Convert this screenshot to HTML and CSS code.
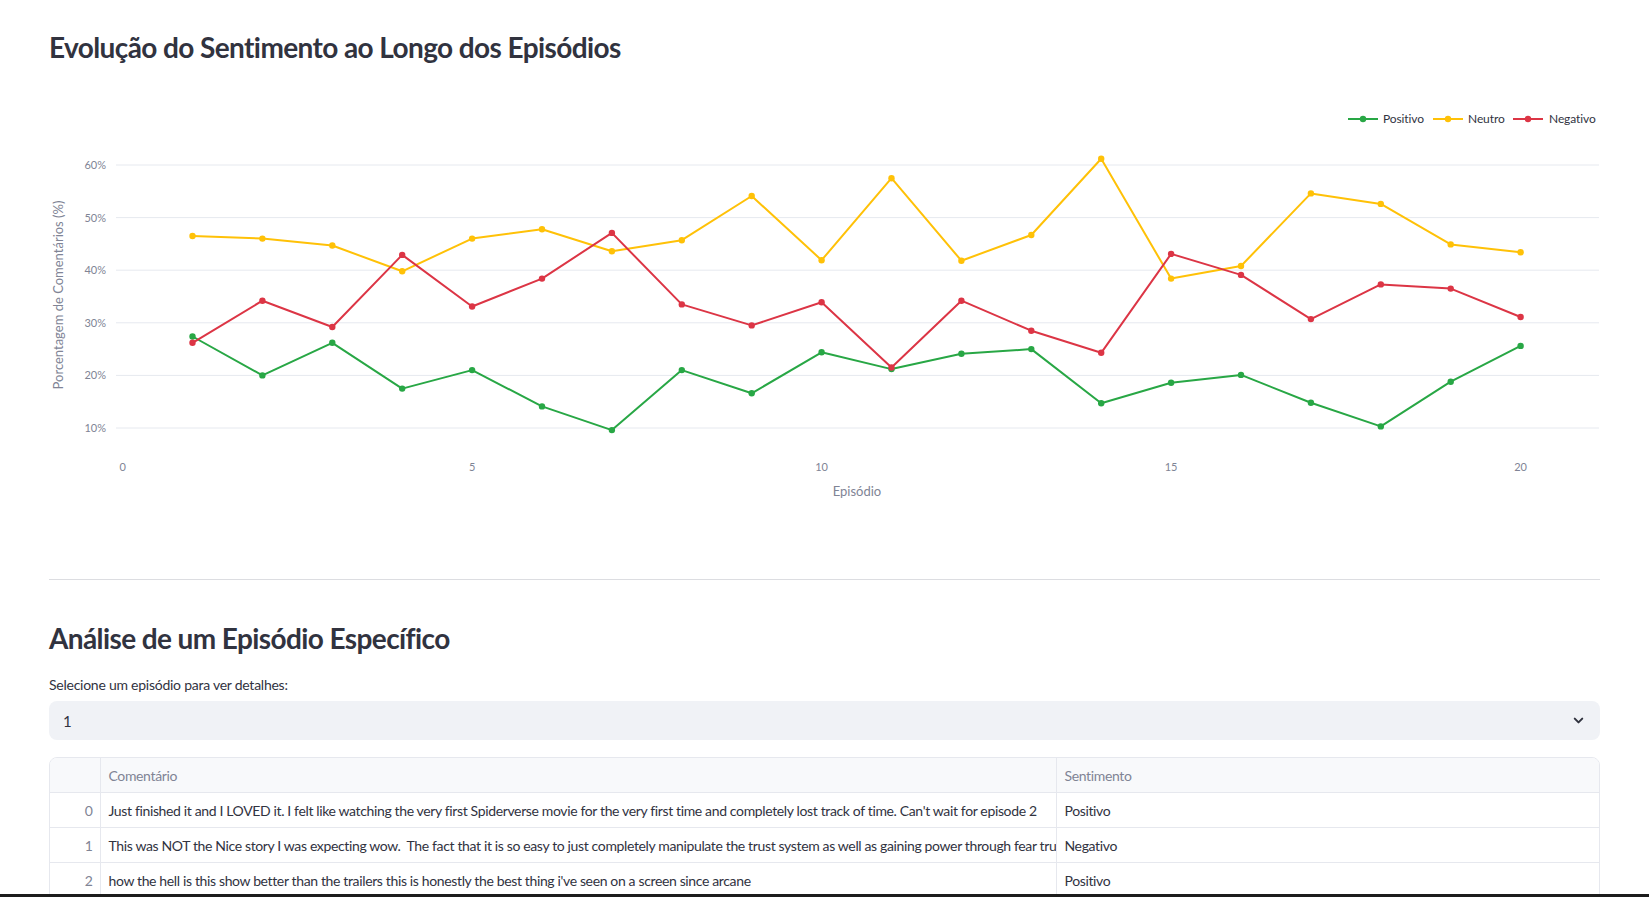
FILE: index.html
```html
<!DOCTYPE html>
<html lang="pt">
<head>
<meta charset="utf-8">
<title>Análise de Sentimento</title>
<link rel="stylesheet" href="styles.css">
</head>
<body>
<main class="main">
  <h2 class="title title-first">Evolução do Sentimento ao Longo dos Episódios</h2>

  <div class="chart">
    <svg class="chart-svg" width="1551" height="480" viewBox="0 0 1551 480" xmlns="http://www.w3.org/2000/svg">
      <g class="grid">
        <line x1="67" y1="85" x2="1550" y2="85"/>
        <line x1="67" y1="137.6" x2="1550" y2="137.6"/>
        <line x1="67" y1="190.2" x2="1550" y2="190.2"/>
        <line x1="67" y1="242.8" x2="1550" y2="242.8"/>
        <line x1="67" y1="295.4" x2="1550" y2="295.4"/>
        <line x1="67" y1="348" x2="1550" y2="348"/>
      </g>
      <g class="ytick">
        <text x="57" y="89">60%</text>
        <text x="57" y="141.6">50%</text>
        <text x="57" y="194.2">40%</text>
        <text x="57" y="246.8">30%</text>
        <text x="57" y="299.4">20%</text>
        <text x="57" y="352">10%</text>
      </g>
      <g class="xtick">
        <text x="73.6" y="391">0</text>
        <text x="423.1" y="391">5</text>
        <text x="772.6" y="391">10</text>
        <text x="1122.1" y="391">15</text>
        <text x="1471.6" y="391">20</text>
      </g>
      <text class="axis-title" x="808" y="416">Episódio</text>
      <text class="axis-title ytitle" x="0" y="0" transform="translate(14 215) rotate(-90)">Porcentagem de Comentários (%)</text>

      <g class="legend">
        <line class="l-pos" x1="1299" y1="39" x2="1329" y2="39"/>
        <circle class="m-pos" cx="1314" cy="39" r="3.2"/>
        <text x="1334" y="43">Positivo</text>
        <line class="l-neu" x1="1384" y1="39" x2="1414" y2="39"/>
        <circle class="m-neu" cx="1399" cy="39" r="3.2"/>
        <text x="1419" y="43">Neutro</text>
        <line class="l-neg" x1="1464" y1="39" x2="1494" y2="39"/>
        <circle class="m-neg" cx="1479" cy="39" r="3.2"/>
        <text x="1500" y="43">Negativo</text>
      </g>

      <g id="series"></g>
    </svg>
  </div>

  <hr class="divider">

  <h2 class="title title-second">Análise de um Episódio Específico</h2>

  <label class="field-label" for="ep">Selecione um episódio para ver detalhes:</label>
  <div class="select" id="ep">
    <span class="select-value">1</span>
    <svg class="chev" width="15" height="15" viewBox="0 0 24 24"><path d="M6 9l6 6 6-6" fill="none" stroke="#31333f" stroke-width="3.2" stroke-linecap="round" stroke-linejoin="round"/></svg>
  </div>

  <div class="table-wrap">
    <table class="df">
      <colgroup><col class="c-idx"><col class="c-com"><col class="c-sen"></colgroup>
      <thead>
        <tr><th class="idx"></th><th>Comentário</th><th>Sentimento</th></tr>
      </thead>
      <tbody>
        <tr><td class="idx">0</td><td>Just finished it and I LOVED it. I felt like watching the very first Spiderverse movie for the very first time and completely lost track of time. Can't wait for episode 2</td><td>Positivo</td></tr>
        <tr><td class="idx">1</td><td>This was NOT the Nice story I was expecting wow.&nbsp; The fact that it is so easy to just completely manipulate the trust system as well as gaining power through fear truly shows how fragile it is</td><td>Negativo</td></tr>
        <tr><td class="idx">2</td><td>how the hell is this show better than the trailers this is honestly the best thing i've seen on a screen since arcane</td><td>Positivo</td></tr>
        <tr><td class="idx">3</td><td>Great episode</td><td>Positivo</td></tr>
      </tbody>
    </table>
  </div>
</main>
<div class="taskbar"></div>
<script src="chart.js"></script>
</body>
</html>
```

FILE: chart.js
```js
(function () {
  var data = {
    pos: [27.4, 20.0, 26.2, 17.5, 21.0, 14.1, 9.6, 21.0, 16.6, 24.4, 21.2, 24.1, 25.0, 14.7, 18.6, 20.1, 14.8, 10.3, 18.8, 25.6],
    neu: [46.5, 46.0, 44.7, 39.8, 46.0, 47.8, 43.6, 45.7, 54.1, 41.9, 57.5, 41.8, 46.7, 61.2, 38.4, 40.8, 54.6, 52.6, 44.9, 43.4],
    neg: [26.2, 34.2, 29.2, 42.9, 33.1, 38.4, 47.1, 33.5, 29.5, 33.9, 21.5, 34.2, 28.5, 24.3, 43.1, 39.1, 30.7, 37.3, 36.5, 31.1]
  };
  var NS = 'http://www.w3.org/2000/svg';
  var g = document.getElementById('series');
  function x(ep) { return 73.6 + 69.9 * ep; }
  function y(v) { return 348 - (v - 10) * 5.26; }
  ['pos', 'neu', 'neg'].forEach(function (k) {
    var pts = data[k].map(function (v, i) { return x(i + 1).toFixed(1) + ',' + y(v).toFixed(1); });
    var pl = document.createElementNS(NS, 'polyline');
    pl.setAttribute('points', pts.join(' '));
    pl.setAttribute('class', 'l-' + k);
    g.appendChild(pl);
    data[k].forEach(function (v, i) {
      var c = document.createElementNS(NS, 'circle');
      c.setAttribute('cx', x(i + 1).toFixed(1));
      c.setAttribute('cy', y(v).toFixed(1));
      c.setAttribute('r', '3.2');
      c.setAttribute('class', 'm-' + k);
      g.appendChild(c);
    });
  });
})();
```

FILE: styles.css
```css
html, body {
  margin: 0;
  padding: 0;
  background: #ffffff;
  overflow: hidden;
}
body {
  font-family: "Lato", "Source Sans Pro", "Liberation Sans", sans-serif;
  color: #31333f;
}
.main {
  width: 1551px;
  padding: 0 49px;
  display: flex;
  flex-direction: column;
}
.title {
  margin: 0;
  font-weight: 700;
  font-size: 28px;
  line-height: 40px;
  color: #31333f;
  letter-spacing: -0.6px;
}
.title-first {
  padding-top: 27px;
  height: 53px;
}
.chart {
  height: 480px;
}
.chart-svg {
  display: block;
  font-family: "Lato", "Liberation Sans", sans-serif;
}
.grid line {
  stroke: #e6e9ef;
  stroke-width: 1;
}
.ytick text {
  font-size: 11px;
  fill: #808495;
  text-anchor: end;
}
.xtick text {
  font-size: 11px;
  fill: #808495;
  text-anchor: middle;
}
.axis-title {
  font-size: 13px;
  fill: #808495;
  text-anchor: middle;
}
.legend text {
  font-size: 12px;
  fill: #31333f;
  letter-spacing: -0.1px;
}
.l-pos, .l-neu, .l-neg {
  fill: none;
  stroke-width: 2;
  stroke-linejoin: round;
}
.l-pos { stroke: #28a745; }
.l-neu { stroke: #ffc107; }
.l-neg { stroke: #dc3545; }
.m-pos { fill: #28a745; }
.m-neu { fill: #ffc107; }
.m-neg { fill: #dc3545; }
.divider {
  margin: 19px 0 0;
  border: none;
  border-top: 1px solid #dcdde1;
  height: 0;
}
.title-second {
  margin-top: 38px;
}
.field-label {
  margin-top: 17px;
  font-size: 14px;
  line-height: 20px;
  color: #31333f;
  letter-spacing: -0.25px;
}
.select {
  margin-top: 6px;
  height: 39px;
  background: #f0f2f6;
  border-radius: 8px;
  display: flex;
  align-items: center;
  justify-content: space-between;
  padding: 0 14px 0 14px;
}
.select-value {
  font-size: 15px;
  color: #31333f;
}
.chev {
  display: block;
}
.table-wrap {
  margin-top: 17px;
  border: 1px solid #e6e8ee;
  border-radius: 8px;
  overflow: hidden;
}
.df {
  width: 100%;
  border-collapse: collapse;
  table-layout: fixed;
  font-size: 14px;
  letter-spacing: -0.36px;
}
.c-idx { width: 50px; }
.c-com { width: 956px; }
.df th, .df td {
  height: 34px;
  padding: 0 8px;
  text-align: left;
  white-space: nowrap;
  overflow: hidden;
  text-overflow: clip;
  border-bottom: 1px solid #e6e8ee;
  border-right: 1px solid #e6e8ee;
}
.df th:last-child, .df td:last-child {
  border-right: none;
}
.df thead th {
  background: #f8f9fb;
  font-weight: 400;
  color: #808495;
}
.df td {
  color: #31333f;
}
.df .idx {
  text-align: right;
  color: #808495;
  padding-right: 7px;
}
.taskbar {
  position: fixed;
  left: 0;
  right: 0;
  bottom: 0;
  height: 3px;
  background: #1c1c1c;
}
```
